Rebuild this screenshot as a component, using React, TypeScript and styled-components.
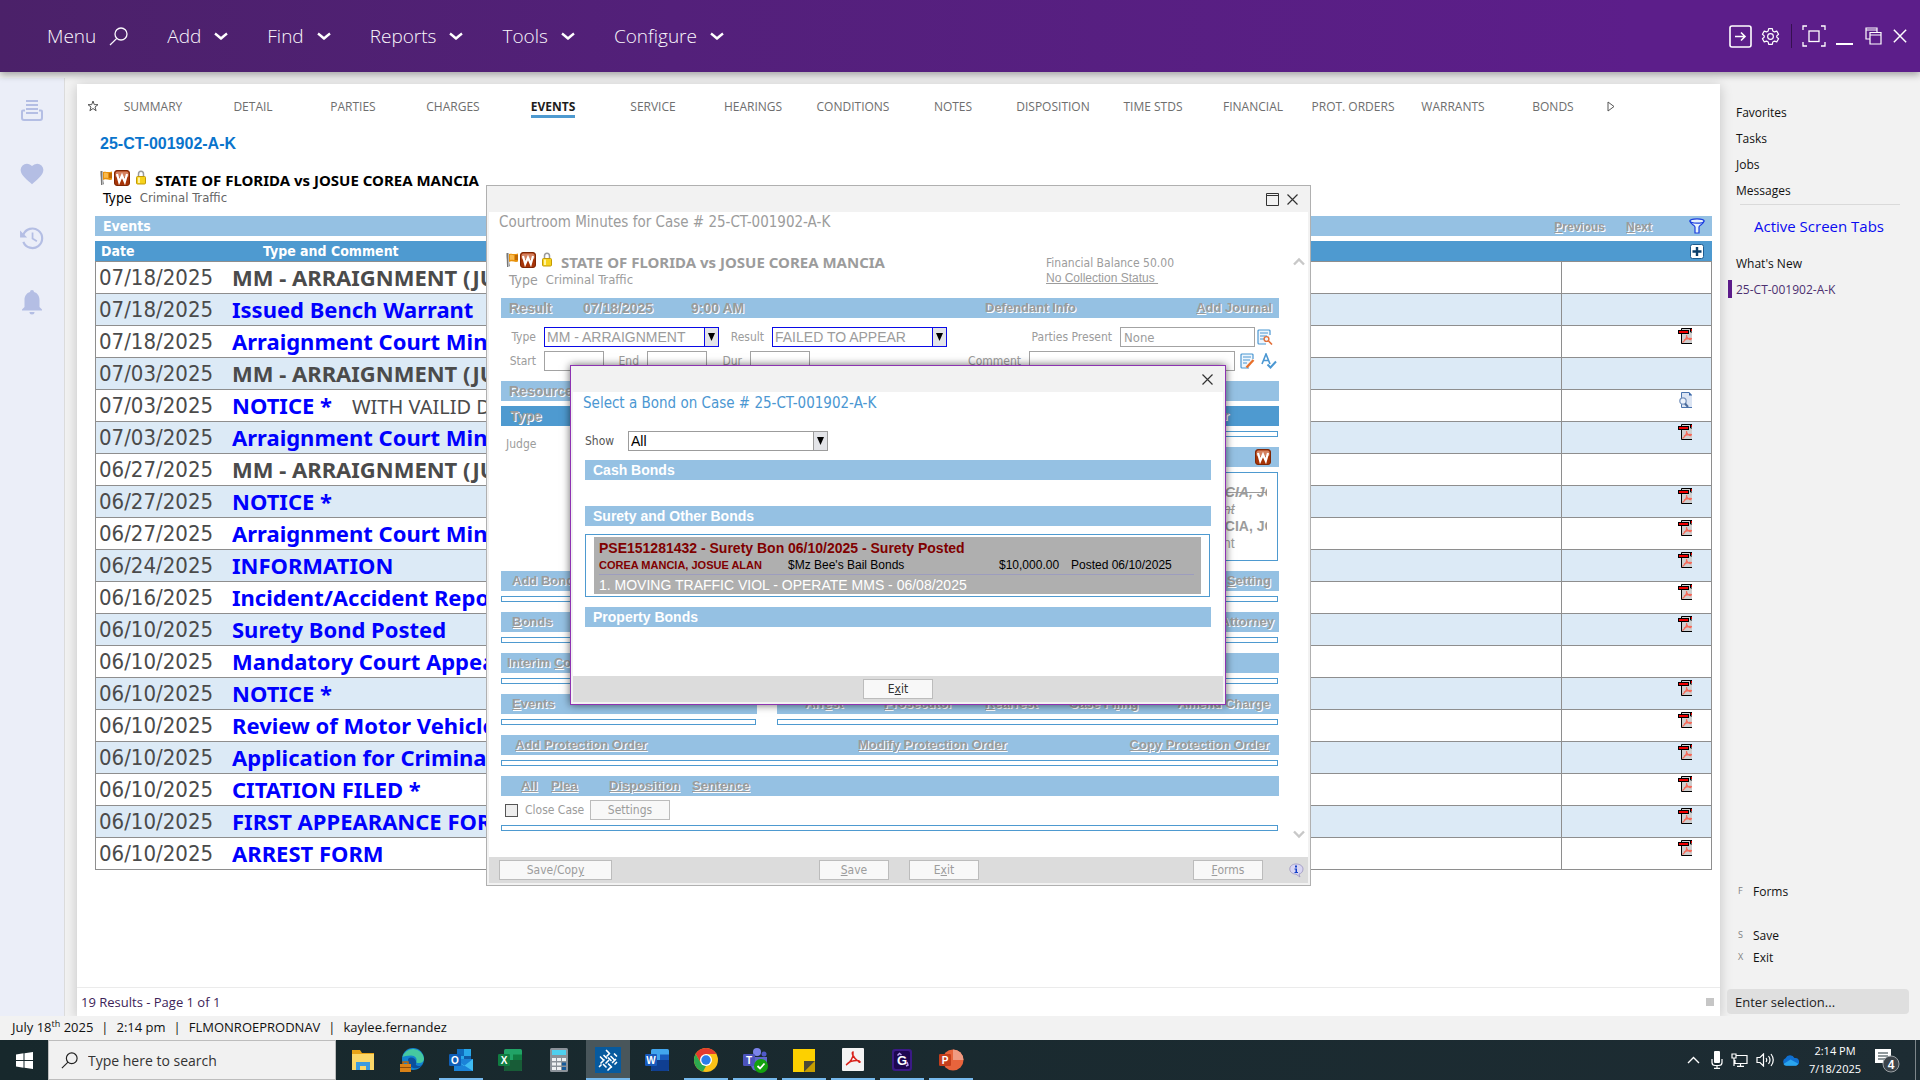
import React from "react";
import styled, { createGlobalStyle, css } from "styled-components";

const segoe = `"Open Sans", "Noto Sans", sans-serif`;
const tahoma = `"DejaVu Sans Condensed", "DejaVu Sans", sans-serif`;
const arial = `"Liberation Sans", Arial, sans-serif`;
const noto = `"Noto Sans", "Open Sans", sans-serif`;

const c = {
  bar: "#95c1e3",
  head: "#4e9ad0",
  grid: "#8e8e8e",
  stripe: "#dceaf6",
  page: "#f2f2f2",
  dim: "#9c9c9c",
  purple: "#5c1b8a",
};

const Global = createGlobalStyle`
  *, *::before, *::after { box-sizing: border-box; }
  html, body { margin: 0; padding: 0; }
  body { background: ${c.page}; font-family: ${segoe}; overflow-x: hidden; }
  button, input, select { font: inherit; margin: 0; }
  a { color: inherit; text-decoration: none; }
  svg { display: block; flex: none; }
`;

const Page = styled.div`
  position: relative;
  display: flex;
  flex-direction: column;
  min-height: 100vh;
`;

/* ---------- top bar ---------- */
const TopBar = styled.header`
  display: flex;
  align-items: center;
  justify-content: space-between;
  height: 72px;
  padding: 0 12px 0 47px;
  background: linear-gradient(90deg, #4b2169 0%, #53207a 35%, #5c1e8a 85%);
  box-shadow: 0 3px 7px rgba(0, 0, 0, 0.32);
  color: #fff;
  z-index: 1;
`;
const MenuNav = styled.nav`
  display: flex;
  align-items: center;
  gap: 39px;
`;
const MenuButton = styled.button`
  display: flex;
  align-items: center;
  gap: 13px;
  padding: 0;
  border: 0;
  background: none;
  color: #fbf8fd;
  font-size: 19px;
  font-weight: 300;
  line-height: 28px;
`;
const WindowTools = styled.div`
  display: flex;
  align-items: center;
  gap: 9px;
`;
const ToolSplit = styled.span`
  width: 1px;
  height: 24px;
  margin: 0 1px 0 2px;
  background: #351050;
`;
const IconButton = styled.button`
  display: flex;
  align-items: center;
  justify-content: center;
  padding: 0;
  border: 0;
  background: none;
  color: inherit;
`;

/* ---------- body frame ---------- */
const Body = styled.div`
  display: grid;
  grid-template-columns: 65px minmax(0, 1fr) 200px;
  flex: 1;
`;
const Rail = styled.nav`
  display: flex;
  flex-direction: column;
  align-items: center;
  gap: 38px;
  margin-top: 6px;
  padding-top: 19px;
  border-right: 1px solid #dcdcdc;
  background: #ebeef8;
  color: #b4bee4;
`;
const RailButton = styled(IconButton)`
  width: 26px;
  height: 26px;
`;
const Panel = styled.main`
  display: flex;
  flex-direction: column;
  margin: 12px 0 0 12px;
  background: #fff;
  box-shadow: 0 2px 12px rgba(0, 0, 0, 0.2);
`;
const Tabs = styled.nav`
  display: flex;
  align-items: center;
  height: 44px;
  padding-left: 8px;
  color: #6e6e6e;
`;
const Tab = styled.a<{ $active?: boolean }>`
  display: flex;
  justify-content: center;
  width: 100px;
  font-size: 12px;
  line-height: 18px;
  white-space: nowrap;
  span {
    border-bottom: 3px solid transparent;
    height: 20px;
  }
  ${(p) =>
    p.$active &&
    css`
      color: #1d1d1d;
      font-weight: 700;
      span {
        border-color: ${c.head};
      }
    `}
`;
const TabIcon = styled(IconButton)`
  width: 16px;
  height: 16px;
  color: #555;
`;
const TabStrip = styled.div`
  display: flex;
  margin-top: 4px;
  padding-left: 2px;
`;
const PanelBody = styled.div`
  flex: 1;
  padding: 0 8px 0 18px;
`;
const CaseNumber = styled.a`
  display: block;
  padding-left: 5px;
  color: #0a74cc;
  font: 700 16px/32px ${arial};
`;
const CaseTitle = styled.div<{ $top?: number }>`
  display: flex;
  gap: 1px;
  height: 22px;
  margin-top: ${(p) => p.$top || 0}px;
  padding-left: 5px;
  strong {
    margin-left: 5px;
    font: 700 15px/20px ${noto};
    white-space: nowrap;
  }
`;
const CaseType = styled.div`
  display: flex;
  align-items: center;
  height: 12px;
  padding-left: 8px;
  font: 14px/14px ${tahoma};
  span {
    margin-left: 8px;
    color: #666;
    font-size: 13px;
  }
`;
const Emboss = styled.span<{ $u?: boolean }>`
  color: #9b9b9b;
  font: 700 13px/20px ${arial};
  text-shadow: 1px 1px 0 #fff;
  white-space: nowrap;
  text-decoration: ${(p) => (p.$u ? "underline" : "none")};
`;
const EmbossLink = styled(Emboss).attrs({ as: "a", href: "#" } as any)``;
const ListBar = styled.div`
  display: flex;
  align-items: center;
  height: 20px;
  margin: 12px 0 5px;
  padding: 0 7px 0 8px;
  background: ${c.bar};
  color: #fff;
  h2 {
    flex: 1;
    margin: 0;
    font: 700 14px/20px ${tahoma};
  }
`;
const ListLinks = styled.div`
  display: flex;
  gap: 21px;
  margin-right: 37px;
  padding-top: 2px;
  ${Emboss} { font-size: 12px; }
`;

/* ---------- event table ---------- */
const EventTable = styled.table`
  width: 100%;
  table-layout: fixed;
  border-collapse: separate;
  border-spacing: 0;
  font-family: ${tahoma};
  th {
    height: 21px;
    padding: 0 0 0 6px;
    border-bottom: 1px solid ${c.grid};
    background: ${c.head};
    color: #fff;
    font-size: 14px;
    line-height: 20px;
    text-align: left;
  }
  th:nth-child(2) {
    padding-left: 31px;
  }
  th:last-child svg {
    margin: 0 8px 0 auto;
  }
  td {
    height: 32px;
    padding: 0;
    border-bottom: 1px solid ${c.grid};
    color: #4b4b4b;
    font-size: 22px;
    line-height: 31px;
    white-space: nowrap;
    overflow: hidden;
    vertical-align: top;
  }
  td:first-child {
    padding-left: 3px;
    border-left: 1px solid ${c.grid};
  }
  td:last-child {
    border-left: 1px solid ${c.grid};
    border-right: 1px solid ${c.grid};
  }
  td:last-child svg {
    margin: 2px 19px 0 auto;
  }
  tbody tr:nth-child(even) td {
    background: ${c.stripe};
  }
`;
const EventCell = styled.div`
  height: 31px;
  overflow: hidden;
  font: 22px/31px ${noto};
`;
const EventName = styled.a<{ $plain?: boolean }>`
  color: ${(p) => (p.$plain ? "#4b4b4b" : "#0000fe")};
  font-weight: 700;
`;
const EventNote = styled.span`
  margin-left: 20px;
  font-size: 20px;
`;
const Results = styled.footer`
  display: flex;
  align-items: center;
  justify-content: space-between;
  height: 29px;
  padding: 0 6px 0 4px;
  border-top: 1px solid #ebebeb;
  color: #3c2358;
  font-size: 13px;
`;
const Grip = styled.span`
  width: 8px;
  height: 8px;
  background: #c6c6c6;
`;

/* ---------- right side ---------- */
const Side = styled.aside`
  display: flex;
  flex-direction: column;
  padding: 27px 11px 2px 7px;
  color: #111;
  font-size: 12px;
`;
const SideLink = styled.a<{ $active?: boolean }>`
  display: flex;
  align-items: center;
  height: 18px;
  margin: 4px 0 4px 1px;
  padding-left: 4px;
  border-left: 4px solid ${(p) => (p.$active ? c.purple : "transparent")};
  color: ${(p) => (p.$active ? "#4c3070" : "#111")};
`;
const SideRule = styled.hr`
  width: 160px;
  height: 1px;
  margin: 1px 0 11px 13px;
  border: 0;
  background: #dadada;
`;
const SideTitle = styled.a`
  margin: 0 0 14px 27px;
  color: #0a0af0;
  font-size: 15px;
  line-height: 20px;
`;
const Shortcuts = styled.div`
  display: flex;
  flex-direction: column;
  margin-top: auto;
`;
const Shortcut = styled.button<{ $gap?: number }>`
  display: flex;
  align-items: center;
  height: 22px;
  margin-bottom: ${(p) => p.$gap || 0}px;
  padding: 0 0 0 11px;
  border: 0;
  background: none;
  color: #111;
  font-size: 12px;
  kbd {
    width: 15px;
    color: #808080;
    font: 9px/22px ${segoe};
    text-align: left;
  }
`;
const SelectionInput = styled.input`
  width: 100%;
  height: 25px;
  padding: 0 8px;
  border: 0;
  border-radius: 4px;
  background: #dfdfdf;
  font-size: 13px;
  &::placeholder {
    color: #222;
    opacity: 1;
  }
`;

/* ---------- status + taskbar ---------- */
const Status = styled.div`
  display: flex;
  align-items: center;
  gap: 8px;
  height: 24px;
  padding: 0 0 2px 12px;
  background: ${c.page};
  color: #111;
  font-size: 13px;
  sup {
    font-size: 9px;
    line-height: 0;
  }
`;
const Taskbar = styled.footer`
  display: flex;
  height: 40px;
  background: linear-gradient(90deg, #17282c, #1d2c33);
  color: #fff;
`;
const StartButton = styled(IconButton)`
  width: 48px;
`;
const SearchBox = styled.label`
  display: flex;
  align-items: center;
  gap: 10px;
  width: 288px;
  padding-left: 12px;
  border: 1px solid #bdbdbd;
  background: #f1f1f1;
  color: #222;
  input {
    flex: 1;
    min-width: 0;
    padding: 0;
    border: 0;
    background: none;
    font-size: 14px;
  }
  input::placeholder {
    color: #333;
    opacity: 1;
  }
`;
const AppRow = styled.div`
  display: flex;
  flex: 1;
  gap: 5px;
  padding-left: 5px;
`;
const AppButton = styled(IconButton)<{ $open?: boolean; $active?: boolean }>`
  width: 44px;
  border-bottom: 2px solid transparent;
  border-top: 2px solid transparent;
  ${(p) => p.$open && css`border-bottom-color: #76b9ed;`}
  ${(p) => p.$active && css`background: #49565b; border-top-color: #49565b;`}
`;
const Tray = styled.div`
  display: flex;
  align-items: center;
  gap: 8px;
`;
const TrayArrow = styled.svg`
  margin-right: 3px;
`;
const Clock = styled.time`
  width: 56px;
  margin-right: 3px;
  font: 11px/18px ${segoe};
  text-align: center;
`;
const ShowDesktop = styled.span`
  width: 5px;
  height: 40px;
  margin-left: 7px;
  border-left: 1px solid #7d868a;
`;

/* ---------- windows ---------- */
const Window = styled.section<{ $left: number; $top: number; $width: number; $height: number; $front?: boolean }>`
  position: absolute;
  z-index: 2;
  left: ${(p) => p.$left}px;
  top: ${(p) => p.$top}px;
  display: flex;
  flex-direction: column;
  width: ${(p) => p.$width}px;
  min-height: ${(p) => p.$height}px;
  padding: 0 2px 2px;
  border: 1px solid ${(p) => (p.$front ? "#8e33b2" : "#b0b0b0")};
  background: ${c.page};
  ${(p) => p.$front && css`box-shadow: 0 0 8px rgba(0, 0, 0, 0.6);`}
`;
const WindowBar = styled.div`
  display: flex;
  align-items: center;
  justify-content: flex-end;
  gap: 7px;
  height: 26px;
  padding-right: 9px;
  color: #333;
`;
const WindowTitle = styled.h1<{ $front?: boolean }>`
  margin: 0;
  padding-left: 10px;
  color: ${(p) => (p.$front ? "#4b97d2" : c.dim)};
  font: 400 15px/${(p) => (p.$front ? 22 : 20)}px ${tahoma};
`;
const WindowBody = styled.div`
  flex: 1;
  background: #fff;
`;
const WindowFoot = styled.div`
  display: flex;
  align-items: center;
  height: 26px;
  background: #dcdcdc;
`;
const PushButton = styled.button<{ $width: number; $dim?: boolean }>`
  width: ${(p) => p.$width}px;
  height: 20px;
  padding: 0;
  border: 1px solid #bcbcbc;
  background: #f8f8f8;
  color: ${(p) => (p.$dim ? c.dim : "#333")};
  font: 12px/18px ${tahoma};
`;
const Scroller = styled.div`
  display: flex;
  gap: 14px;
  padding: 20px 3px 0 12px;
`;
const Form = styled.div`
  flex: 1;
  min-width: 0;
  color: ${c.dim};
  font: 12px/20px ${tahoma};
`;
const ScrollArrows = styled.div`
  display: flex;
  flex-direction: column;
  justify-content: space-between;
  padding: 5px 0 2px;
  color: #c8c8c8;
`;
const FormHead = styled.div`
  display: grid;
  grid-template-columns: 545px 1fr;
  height: 36px;
  margin-bottom: 10px;
  ${CaseType} span { color: ${c.dim}; }
`;
const Balance = styled.div`
  padding-top: 4px;
  line-height: 15px;
  a {
    display: block;
    font: 12px/15px ${arial};
    text-decoration: underline;
  }
`;
const Bar = styled.div<{ $cols?: string; $pad?: string; $dark?: boolean }>`
  display: grid;
  grid-template-columns: ${(p) => p.$cols || "1fr auto"};
  align-items: center;
  height: 20px;
  padding: ${(p) => p.$pad || "0 8px"};
  background: ${(p) => (p.$dark ? c.head : c.bar)};
  h2 {
    margin: 0;
    color: #fff;
    font: 700 14px/20px ${arial};
  }
`;
const Big = styled(Emboss)`
  font-size: 14px;
`;
const Field = styled.div<{ $top: number }>`
  display: flex;
  align-items: center;
  height: 20px;
  margin-top: ${(p) => p.$top}px;
`;
const FieldLabel = styled.label<{ $width: number }>`
  width: ${(p) => p.$width}px;
  padding-right: 8px;
  text-align: right;
  white-space: nowrap;
`;
const TextBox = styled.input<{ $width: number }>`
  width: ${(p) => p.$width}px;
  height: 20px;
  margin-right: 2px;
  padding: 0 3px;
  border: 1px solid #a3a3a3;
  background: #fff;
  color: ${c.dim};
  font: 13px/18px ${tahoma};
`;
const TimeBox = styled(TextBox)`
  margin-right: 0;
`;
const Combo = styled.span<{ $width: number; $blue?: boolean }>`
  position: relative;
  display: block;
  width: ${(p) => p.$width}px;
  height: 20px;
  border: 1px solid ${(p) => (p.$blue ? "#0a0ae6" : "#9c9c9c")};
  background: #fff;
  select {
    width: 100%;
    height: 18px;
    padding: 0 18px 0 2px;
    border: 0;
    appearance: none;
    background: none;
    color: ${(p) => (p.$blue ? c.dim : "#000")};
    font: 14px/18px ${arial};
  }
  i {
    position: absolute;
    inset: 0 0 0 auto;
    display: flex;
    align-items: center;
    justify-content: center;
    width: 14px;
    border-left: 1px solid ${(p) => (p.$blue ? "#0a0ae6" : "#9c9c9c")};
    background: #e3e4e8;
    pointer-events: none;
  }
`;
const Split = styled.div`
  display: grid;
  grid-template-columns: 256px minmax(0, 1fr);
  column-gap: 20px;
`;
const Judge = styled.div`
  padding: 8px 0 0 5px;
`;
const Strip = styled.div`
  height: 6px;
  margin: 5px 1px 10px 0;
  border: 1px solid ${c.head};
`;
const PartyBox = styled.div`
  height: 89px;
  margin: 5px 1px 10px 0;
  padding: 11px 10px 0 361px;
  border: 1px solid ${c.head};
`;
const PartyName = styled.div<{ $struck?: boolean }>`
  overflow: hidden;
  font: ${(p) => (p.$struck ? "italic" : "normal")} 700 14px/17px ${arial};
  text-decoration: ${(p) => (p.$struck ? "line-through" : "none")};
  white-space: nowrap;
`;
const PartyRole = styled(PartyName)`
  padding-left: 31px;
  font-weight: 400;
`;
const CloseRow = styled.div`
  display: flex;
  align-items: center;
  height: 20px;
  margin-top: 4px;
  padding-left: 4px;
  label {
    width: 65px;
    margin-left: 7px;
  }
`;
const CheckBox = styled.input`
  width: 13px;
  height: 13px;
  border: 1px solid #555;
  appearance: none;
  background: #eee;
`;
const BondForm = styled.div`
  padding: 17px 12px 48px;
`;
const ShowRow = styled.div`
  display: flex;
  align-items: center;
  margin-bottom: 9px;
  color: #555;
  font: 12px/20px ${tahoma};
  label {
    width: 43px;
  }
`;
const BondBox = styled.div`
  margin: 8px 1px 10px 0;
  padding: 2px 8px;
  border: 1px solid ${c.head};
`;
const BondCard = styled.article`
  display: grid;
  grid-template-columns: 189px 211px 72px 1fr;
  padding: 2px 7px 0 5px;
  background: #afafaf;
  color: #000;
  font: 12px/16px ${arial};
  white-space: nowrap;
`;
const BondLine = styled.strong<{ $small?: boolean }>`
  color: #800000;
  font-size: ${(p) => (p.$small ? 11 : 14)}px;
  line-height: ${(p) => (p.$small ? 16 : 18)}px;
`;
const BondDate = styled(BondLine)`
  grid-column: 2 / -1;
`;
const BondCharge = styled.div`
  grid-column: 1 / -1;
  margin-top: 1px;
  padding-top: 2px;
  border-top: 1px solid #9d9dbe;
  color: #fff;
  font-size: 14px;
  line-height: 17px;
`;
const Spacer = styled.div<{ $height?: number; $width?: number }>`
  flex: none;
  width: ${(p) => p.$width || 0}px;
  height: ${(p) => p.$height || 0}px;
`;
const Grow = styled.span`
  flex: 1;
`;

/* ---------- icons ---------- */
const Chevron = () => (
  <svg width="14" height="9" viewBox="0 0 14 9" fill="none" stroke="#fff" strokeWidth="2.400">
    <path d="M1 1.500Q3 3 7 6.500 11 3 13 1.500" />
  </svg>
);
const Cross = ({ s = 13 }: { s?: number }) => (
  <svg width={s} height={s} viewBox="0 0 13 13" stroke="currentColor" strokeWidth="1.200">
    <path d="M1.500 1.500 11.500 11.500M11.500 1.500 1.500 11.500" />
  </svg>
);
const Magnifier = ({ s = 19 }: { s?: number }) => (
  <svg width={s} height={s} viewBox="0 0 19 19" fill="none" stroke="currentColor" strokeWidth="1.300">
    <circle cx="12" cy="7" r="6" />
    <path d="M7.800 11.400 1 18" />
  </svg>
);
const CaseIcons = () => (
  <>
    <svg width="13" height="16" viewBox="0 0 13 16">
      <path d="M0 2h1.500L4 14l-1.500 1z" fill="#8a8a8a" />
      <path d="M0 1h3v13H1z" fill="#b9b9b9" />
      <path d="M1 1h1v14H1z" fill="#777" />
      <path d="M3 2c3-1 4 1 9-.500v8C9 11 6 8 3 10z" fill="#e8920c" />
      <path d="M4 3c2-.500 3 .500 4 .500V8c-1 0-2-.500-4 0z" fill="#f9b94c" />
      <path d="M9 3h3v5H9z" fill="#c06a04" />
    </svg>
    <Warrant />
    <svg width="18" height="16" viewBox="-5 0 18 16">
      <path d="M2.500 7V4a2.500 2.800 0 0 1 5 0v3" fill="none" stroke="#9a9a9a" strokeWidth="1.500" />
      <rect x=".5" y="6.500" width="9" height="7.500" rx="1" fill="#f6d21c" stroke="#c39a06" />
      <path d="M2 7.500h2v5.500H2z" fill="#fff3a0" />
    </svg>
  </>
);
const Warrant = () => (
  <svg width="16" height="16" viewBox="0 0 16 16">
    <rect x=".5" y=".5" width="15" height="15" rx="2.500" fill="#a63408" stroke="#7e2604" />
    <rect x="1.500" y="1.500" width="13" height="6" rx="2" fill="#d4815f" />
    <path d="m3 4 2.200 8L8 5.500 10.800 12 13 4" fill="none" stroke="#fff" strokeWidth="2.200" />
  </svg>
);
const Pdf = () => (
  <svg width="14" height="16" viewBox="0 0 14 16" role="img" aria-label="PDF document">
    <path d="M3 0h9v3h2v13H3z" fill="#cfcfcf" />
    <path d="M14 15.500H3.500V.5H14" fill="none" stroke="#000" />
    <path d="M12.500 1v3H14" fill="none" stroke="#000" />
    <rect x=".5" y="2.500" width="10" height="3" fill="#f00000" stroke="#000" />
    <path d="M13 1h1v2h-1z" fill="#e00" />
    <path d="M4.500 14.500C7 12.500 9 9.500 8.500 7c0 3 2.500 4.800 5 4.500M6 12c3-1.800 5-2 8-1.500" fill="none" stroke="#f66a5a" strokeWidth="1.200" />
  </svg>
);
const DocLens = () => (
  <svg width="13" height="16" viewBox="0 0 13 16" role="img" aria-label="Preview document">
    <path d="M13 15.500H2.500V.5H10l3 3" fill="#dbe4f3" stroke="#4b74ae" />
    <path d="M10 0v3.500h3z" fill="#3665a8" />
    <circle cx="4" cy="9" r="3.200" fill="#eef4fc" stroke="#7b96bf" strokeWidth="1.300" />
    <path d="m6 11.500 3 3.500" stroke="#4c6c9c" strokeWidth="2" />
  </svg>
);
const FormSheet = ({ lens }: { lens?: boolean }) => (
  <svg width="16" height="16" viewBox="0 0 16 16" fill="none">
    <path d="M13 6V2a1 1 0 0 0-1-1H2a1 1 0 0 0-1 1v12a1 1 0 0 0 1 1h7" stroke="#4b97d2" strokeWidth="1.200" fill="#eef6fd" />
    <path d="M3 4h8M3 7h7M3 10h4" stroke="#4b97d2" />
    {lens ? (
      <>
        <circle cx="9.500" cy="10" r="2.400" stroke="#e2703a" strokeWidth="1.400" />
        <path d="m11.500 12 3.500 3.500" stroke="#e2703a" strokeWidth="1.600" />
      </>
    ) : (
      <path d="m6.500 14.500 7-7.500" stroke="#e8702a" strokeWidth="2.400" />
    )}
  </svg>
);
const SpellCheck = () => (
  <svg width="16" height="16" viewBox="0 0 16 16" fill="none" stroke="#4b97d2" strokeWidth="1.600">
    <path d="M1 11 5 1l4 10M2.500 7.500h5" />
    <path d="m6.500 11.500 3 3L15 8.500" strokeWidth="2" />
  </svg>
);
const DownTriangle = () => (
  <svg width="7" height="8" viewBox="0 0 7 8"><path d="M0 0h7L3.500 8z" fill="#000" /></svg>
);
const ScrollArrow = ({ down }: { down?: boolean }) => (
  <svg width="12" height="9" viewBox="0 0 12 9" fill="none" stroke="currentColor" strokeWidth="2.400">
    <path d={down ? "M1 1.500l5 5 5-5" : "M1 7.500l5-5 5 5"} />
  </svg>
);
const InfoBubble = () => (
  <svg width="15" height="15" viewBox="0 0 15 15">
    <path d="M7 1c4 0 7 2 7 5s-2 4.500-4 5l1 3-4-2.800C3.500 11 .8 9 .8 6S3.500 1 7 1z" fill="#d9d6f2" stroke="#9a94bf" strokeWidth=".8" />
    <path d="M6 2.500h2v2H6zM5.500 5.500H8v3.500h1v1H5.500V9h1V6.500h-1z" fill="#1440c8" />
  </svg>
);

/* Taskbar pictures share one 26 x 26 canvas. */
const Tile = ({ children }: { children: React.ReactNode }) => (
  <svg width="26" height="26" viewBox="0 0 26 26">{children}</svg>
);
const letter = { fontFamily: arial, fontWeight: 700, fill: "#fff", textAnchor: "middle" as const };
const OfficeTile = ({ main, light, dark, ch, round }: { main: string; light: string; dark: string; ch: string; round?: boolean }) => (
  <Tile>
    {round ? (
      <><circle cx="15" cy="13" r="10.500" fill={light} /><path d="M15 2.500A10.500 10.500 0 0 1 25.500 13H15z" fill="#f09a82" /></>
    ) : (
      <><rect x="7" y="2" width="18" height="22" rx="1.500" fill={light} /><path d="M7 13h18v9.500a1.500 1.500 0 0 1-1.500 1.500h-15A1.500 1.500 0 0 1 7 22.500z" fill={dark} /><path d="M16 7.500h9V13h-9z" fill={main} /></>
    )}
    <rect x="1" y="7" width="12" height="12" rx="1.200" fill={main} />
    <text x="7" y="16.500" fontSize="10" {...letter}>{ch}</text>
  </Tile>
);
const Explorer = () => (
  <Tile>
    <path d="M2 3h8l2 3h12v17H2z" fill="#e8a317" />
    <path d="M2 7h22v16H2z" fill="#fbd768" />
    <path d="M6 15h14v8h-4v-4h-6v4H6z" fill="#3b9be0" />
  </Tile>
);
const Edge = () => (
  <Tile>
    <circle cx="14" cy="12" r="11" fill="#1282d0" />
    <path d="M3.500 10A11 11 0 0 1 25 11.500c0 4-4 5.500-8 4 2-4-1-7-5-7-4 0-7 1-8.500 1.500z" fill="#46c8a0" />
    <path d="M9 12c3-3 7-1 8 2 1 2-1 3 0 4 2 2 5 1 7-1-3 6-15 7-15-5z" fill="#0c4f9c" />
    <path d="M1 17h11v8H1z" fill="#d98217" /><path d="M4 17v-2h5v2" stroke="#b8660a" strokeWidth="1.500" fill="none" />
    <path d="M1 20h11v1H1z" fill="#8c4b06" />
  </Tile>
);
const Outlook = () => (
  <Tile>
    <rect x="9" y="2" width="14" height="14" fill="#28a8ea" />
    <path d="M9 2h7v7H9z" fill="#0f6cbd" /><path d="M16 9h7v6h-7z" fill="#0f5ca6" />
    <path d="M6 12h19v12H6z" fill="#1b83d8" /><path d="m6 12 10 7 9-7v12z" fill="#3fbcf2" />
    <rect x="1" y="7" width="12" height="12" rx="1.200" fill="#0f5fb8" />
    <text x="7" y="16.500" fontSize="10" {...letter}>O</text>
  </Tile>
);
const Calculator = () => (
  <Tile>
    <rect x="4" y="1" width="18" height="24" rx="1.500" fill="#8b9299" />
    <rect x="6" y="3" width="14" height="5" fill="#4fd0ee" />
    {[11, 15.5, 20].map((y) => [6, 11, 16].map((x) => (
      <rect key={`${x}-${y}`} x={x} y={y} width="4" height="3" fill={x === 16 && y > 12 ? "#175a9a" : "#eef1f3"} />
    )))}
  </Tile>
);
const CourtApp = () => (
  <Tile>
    <rect width="26" height="26" fill="#075a9e" />
    <g stroke="#fff" strokeWidth="1.700" strokeLinecap="round">
      <path d="M11.500 3.500 14 6M14.500 6.500 12 9M9 8.500l2.500 2.500M5.500 10 8 12.500M16 9.500l3 3M19.500 7l2 2M13.500 11l2.500 2.500M6 16l3-3M11 16l2.500-2.500M17.500 15.500l3-3M8.500 17.500 11 20M13.500 17l3 3M13 23l2.500-2.500M20 17l1.500-1.500M4.500 19.500 6 18" />
    </g>
  </Tile>
);
const Chrome = () => (
  <Tile>
    <circle cx="13" cy="13" r="12" fill="#fbc116" />
    <path d="M13 1a12 12 0 0 1 10.400 6H13L7.800 16 2.600 7A12 12 0 0 1 13 1z" fill="#e33b2e" />
    <path d="M2.600 7l5.200 9 5.200 3-3 5.600A12 12 0 0 1 2.600 7z" fill="#2da94f" />
    <circle cx="13" cy="13" r="6" fill="#fff" /><circle cx="13" cy="13" r="4.700" fill="#2b7de9" />
  </Tile>
);
const Teams = () => (
  <Tile>
    <circle cx="15" cy="5" r="4" fill="#7b83eb" /><circle cx="22" cy="7" r="2.500" fill="#5059c9" />
    <path d="M9 10h16v8a6 6 0 0 1-6 6h-4a6 6 0 0 1-6-6z" fill="#5f66cc" />
    <rect x="1" y="7" width="12" height="12" rx="1.200" fill="#4b53bc" />
    <text x="7" y="16.500" fontSize="10" {...letter}>T</text>
    <circle cx="19" cy="19" r="7" fill="#13a10e" /><path d="m15.500 19 2.500 2.500 4.500-5" stroke="#fff" strokeWidth="1.800" fill="none" />
  </Tile>
);
const Notes = () => (
  <Tile>
    <path d="M2 2h22v12L13 25H2z" fill="#fdd000" /><path d="M13 25V14h11z" fill="#4b4736" /><path d="M13 25 24 14v11z" fill="#c79d00" />
  </Tile>
);
const Acrobat = () => (
  <Tile>
    <rect x="2" y="1" width="22" height="23" rx="1" fill="#f4f4f4" />
    <path d="M6 18c4-2 8-8 7-13-1.500 0-1 5 6 10 2 1 1-1.500-2-1.500-4 0-8 1.500-10 3.500" fill="none" stroke="#d9231c" strokeWidth="1.500" />
  </Tile>
);
const GApp = () => (
  <Tile>
    <rect x="3" y="2" width="20" height="22" rx="3" fill="#3b1a86" /><rect x="5" y="4" width="16" height="18" rx="2" fill="#1d0750" />
    <path d="M8.500 8.500l2-2 2 1.500M17 19l2-1-1-3" stroke="#b79cf0" strokeWidth="1.500" fill="none" />
    <text x="13" y="18" fontSize="13" {...letter}>G</text>
  </Tile>
);

/* ---------- data ---------- */
const menus = ["Add", "Find", "Reports", "Tools", "Configure"];
const tabs = ["SUMMARY", "DETAIL", "PARTIES", "CHARGES", "EVENTS", "SERVICE", "HEARINGS", "CONDITIONS", "NOTES", "DISPOSITION", "TIME STDS", "FINANCIAL", "PROT. ORDERS", "WARRANTS", "BONDS"];
type Event = { date: string; name: string; note?: string; doc?: "pdf" | "lens"; plain?: boolean };
const events: Event[] = [
  { date: "07/18/2025", name: "MM - ARRAIGNMENT (JUDGE)", plain: true },
  { date: "07/18/2025", name: "Issued Bench Warrant" },
  { date: "07/18/2025", name: "Arraignment Court Minutes", doc: "pdf" },
  { date: "07/03/2025", name: "MM - ARRAIGNMENT (JUDGE)", plain: true },
  { date: "07/03/2025", name: "NOTICE *", note: "WITH VAILID DL", doc: "lens" },
  { date: "07/03/2025", name: "Arraignment Court Minutes", doc: "pdf" },
  { date: "06/27/2025", name: "MM - ARRAIGNMENT (JUDGE)", plain: true },
  { date: "06/27/2025", name: "NOTICE *", doc: "pdf" },
  { date: "06/27/2025", name: "Arraignment Court Minutes", doc: "pdf" },
  { date: "06/24/2025", name: "INFORMATION", doc: "pdf" },
  { date: "06/16/2025", name: "Incident/Accident Report", doc: "pdf" },
  { date: "06/10/2025", name: "Surety Bond Posted", doc: "pdf" },
  { date: "06/10/2025", name: "Mandatory Court Appearance" },
  { date: "06/10/2025", name: "NOTICE *", doc: "pdf" },
  { date: "06/10/2025", name: "Review of Motor Vehicle", doc: "pdf" },
  { date: "06/10/2025", name: "Application for Criminal", doc: "pdf" },
  { date: "06/10/2025", name: "CITATION FILED *", doc: "pdf" },
  { date: "06/10/2025", name: "FIRST APPEARANCE FORM", doc: "pdf" },
  { date: "06/10/2025", name: "ARREST FORM", doc: "pdf" },
];
const apps: { name: string; icon: React.ReactNode; open?: boolean; active?: boolean }[] = [
  { name: "File Explorer", icon: <Explorer /> },
  { name: "Edge", icon: <Edge /> },
  { name: "Outlook", icon: <Outlook />, open: true },
  { name: "Excel", icon: <OfficeTile main="#107c41" light="#21a366" dark="#185c37" ch="X" /> },
  { name: "Calculator", icon: <Calculator /> },
  { name: "Court", icon: <CourtApp />, open: true, active: true },
  { name: "Word", icon: <OfficeTile main="#185abd" light="#41a5ee" dark="#103f91" ch="W" /> },
  { name: "Chrome", icon: <Chrome />, open: true },
  { name: "Teams", icon: <Teams />, open: true },
  { name: "Sticky Notes", icon: <Notes />, open: true },
  { name: "Acrobat", icon: <Acrobat />, open: true },
  { name: "G", icon: <GApp />, open: true },
  { name: "PowerPoint", icon: <OfficeTile main="#c43e1c" light="#e8643c" dark="#b33" ch="P" round />, open: true },
];

const Title = ({ top }: { top?: number }) => (
  <CaseTitle $top={top}>
    <CaseIcons />
    <strong>STATE OF FLORIDA vs JOSUE COREA MANCIA</strong>
  </CaseTitle>
);

const SelectBox = ({ id, value, width, blue }: { id: string; value: string; width: number; blue?: boolean }) => (
  <Combo $width={width} $blue={blue}>
    <select id={id} defaultValue={value}><option>{value}</option></select>
    <i><DownTriangle /></i>
  </Combo>
);

function MinutesWindow() {
  return (
    <Window $left={486} $top={185} $width={825} $height={701}>
      <WindowBar>
        <IconButton aria-label="Maximize">
          <svg width="13" height="13" viewBox="0 0 13 13" fill="none" stroke="currentColor"><path d="M.5.5h12v12H.5zM.5 2.500h12" /></svg>
        </IconButton>
        <IconButton aria-label="Close"><Cross /></IconButton>
      </WindowBar>
      <WindowBody>
        <WindowTitle>Courtroom Minutes for Case # 25-CT-001902-A-K</WindowTitle>
        <Scroller>
          <Form>
            <FormHead>
              <div>
                <Title />
                <CaseType>Type<span>Criminal Traffic</span></CaseType>
              </div>
              <Balance>
                Financial Balance 50.00
                <a href="#">No Collection Status&nbsp;</a>
              </Balance>
            </FormHead>
            <Bar $cols="74px 108px 294px 1fr auto" $pad="0 7px 0 8px">
              <Big>Result</Big><Big>07/18/2025</Big><Big>9:00 AM</Big>
              <EmbossLink>Defendant Info</EmbossLink>
              <EmbossLink><u>A</u>dd Journal</EmbossLink>
            </Bar>
            <Field $top={9}>
              <FieldLabel $width={43} htmlFor="type">Type</FieldLabel>
              <SelectBox id="type" value="MM - ARRAIGNMENT" width={175} blue />
              <FieldLabel $width={53} htmlFor="result">Result</FieldLabel>
              <SelectBox id="result" value="FAILED TO APPEAR" width={175} blue />
              <FieldLabel $width={173} htmlFor="parties">Parties Present</FieldLabel>
              <TextBox id="parties" $width={135} defaultValue="None" />
              <FormSheet lens />
            </Field>
            <Field $top={4}>
              <FieldLabel $width={43} htmlFor="start">Start</FieldLabel>
              <TimeBox id="start" $width={60} />
              <FieldLabel $width={43} htmlFor="end">End</FieldLabel>
              <TimeBox id="end" $width={60} />
              <FieldLabel $width={43} htmlFor="dur">Dur</FieldLabel>
              <TimeBox id="dur" $width={60} />
              <FieldLabel $width={219} htmlFor="comment">Comment</FieldLabel>
              <TextBox id="comment" $width={206} />
              <Spacer $width={3} />
              <FormSheet />
              <Spacer $width={5} />
              <SpellCheck />
            </Field>
            <Spacer $height={10} />
            <Bar><Big>Resources</Big></Bar>
            <Spacer $height={5} />
            <Bar $dark $pad="0 50px 0 9px"><Big>Type</Big><Emboss>Reporter</Emboss></Bar>
            <Split>
              <Judge>Judge</Judge>
              <div>
                <Strip />
                <Bar><span /><Warrant /></Bar>
                <PartyBox>
                  <PartyName $struck>COREA MANCIA, JOSUE ALAN</PartyName>
                  <PartyRole $struck>Defendant</PartyRole>
                  <PartyName>COREA MANCIA, JOSUE ALAN</PartyName>
                  <PartyRole>Defendant</PartyRole>
                </PartyBox>
              </div>
            </Split>
            <Bar $pad="0 8px 0 11px"><EmbossLink>Add Bond</EmbossLink><EmbossLink>Add <u>S</u>etting</EmbossLink></Bar>
            <Strip />
            <Bar $pad="0 5px 0 11px"><EmbossLink><u>B</u>onds</EmbossLink><EmbossLink>Attorney</EmbossLink></Bar>
            <Strip />
            <Bar $pad="0 6px"><EmbossLink>Interim <u>C</u>onditions</EmbossLink></Bar>
            <Strip />
            <Split>
              <div>
                <Bar $pad="0 11px"><EmbossLink><u>E</u>vents</EmbossLink></Bar>
                <Strip />
              </div>
              <div>
                <Bar $cols="79px 101px 84px 1fr auto" $pad="0 9px 0 28px">
                  <EmbossLink>Arr<u>e</u>st</EmbossLink>
                  <EmbossLink><u>P</u>rosecutor</EmbossLink>
                  <EmbossLink><u>R</u>earrest</EmbossLink>
                  <EmbossLink>Case Fi<u>l</u>ing</EmbossLink>
                  <EmbossLink>Amend Char<u>g</u>e</EmbossLink>
                </Bar>
                <Strip />
              </div>
            </Split>
            <Bar $cols="343px 1fr auto" $pad="0 10px 0 14px">
              <EmbossLink $u>Add Protection Order</EmbossLink>
              <EmbossLink $u>Modify Protection Order</EmbossLink>
              <EmbossLink $u>Copy Protection Order</EmbossLink>
            </Bar>
            <Strip />
            <Bar $cols="30px 58px 83px auto" $pad="0 0 0 20px">
              <EmbossLink $u>All</EmbossLink>
              <EmbossLink $u>Plea</EmbossLink>
              <EmbossLink $u>Disposition</EmbossLink>
              <EmbossLink $u>Sentence</EmbossLink>
            </Bar>
            <CloseRow>
              <CheckBox type="checkbox" id="close-case" />
              <label htmlFor="close-case">Close Case</label>
              <PushButton $width={80} $dim>Settings</PushButton>
            </CloseRow>
            <Strip />
          </Form>
          <ScrollArrows>
            <IconButton aria-label="Scroll up"><ScrollArrow /></IconButton>
            <IconButton aria-label="Scroll down"><ScrollArrow down /></IconButton>
          </ScrollArrows>
        </Scroller>
      </WindowBody>
      <WindowFoot>
        <Spacer $width={10} />
        <PushButton $width={113} $dim>Save/Cop<u>y</u></PushButton>
        <Grow />
        <PushButton $width={70} $dim><u>S</u>ave</PushButton>
        <Spacer $width={20} />
        <PushButton $width={70} $dim>E<u>x</u>it</PushButton>
        <Spacer $width={7} />
        <Grow />
        <PushButton $width={70} $dim><u>F</u>orms</PushButton>
        <Spacer $width={26} />
        <InfoBubble />
        <Spacer $width={4} />
      </WindowFoot>
    </Window>
  );
}

function BondWindow() {
  return (
    <Window $front $left={570} $top={365} $width={656} $height={340}>
      <WindowBar><IconButton aria-label="Close"><Cross /></IconButton></WindowBar>
      <WindowBody>
        <WindowTitle $front>Select a Bond on Case # 25-CT-001902-A-K</WindowTitle>
        <BondForm>
          <ShowRow>
            <label htmlFor="show">Show</label>
            <SelectBox id="show" value="All" width={200} />
          </ShowRow>
          <Bar><h2>Cash Bonds</h2></Bar>
          <Spacer $height={26} />
          <Bar><h2>Surety and Other Bonds</h2></Bar>
          <BondBox>
            <BondCard>
              <BondLine>PSE151281432 - Surety Bon</BondLine>
              <BondDate>06/10/2025 - Surety Posted</BondDate>
              <BondLine $small>COREA MANCIA, JOSUE ALAN</BondLine>
              <span>$Mz Bee's Bail Bonds</span>
              <span>$10,000.00</span>
              <span>Posted 06/10/2025</span>
              <BondCharge>1. MOVING TRAFFIC VIOL - OPERATE MMS - 06/08/2025</BondCharge>
            </BondCard>
          </BondBox>
          <Bar><h2>Property Bonds</h2></Bar>
        </BondForm>
      </WindowBody>
      <WindowFoot>
        <Grow />
        <PushButton $width={70}>E<u>x</u>it</PushButton>
        <Grow />
      </WindowFoot>
    </Window>
  );
}

export default function App() {
  return (
    <Page>
      <Global />
      <TopBar>
        <MenuNav>
          <MenuButton>Menu <Magnifier /></MenuButton>
          {menus.map((m) => <MenuButton key={m}>{m} <Chevron /></MenuButton>)}
        </MenuNav>
        <WindowTools>
          <IconButton aria-label="Sign out">
            <svg width="23" height="23" viewBox="0 0 23 23" fill="none" stroke="#fff" strokeWidth="1.600"><rect x="1" y="1" width="21" height="21" rx="2" /><path d="M6 11.500h10M12 7.500l4 4-4 4" /></svg>
          </IconButton>
          <IconButton aria-label="Settings">
            <svg width="19" height="19" viewBox="0 0 24 24" fill="none" stroke="#fff" strokeWidth="1.500" strokeLinejoin="round"><path d="M9.700 2h4.600l.6 3 2.100 1.200 2.900-1 2.300 4-2.300 2v1.600l2.300 2-2.300 4-2.900-1-2.100 1.200-.6 3H9.700l-.6-3L7 17.800l-2.900 1-2.300-4 2.300-2v-1.600l-2.300-2 2.300-4 2.900 1L9.100 5z" /><circle cx="12" cy="12" r="3.600" /></svg>
          </IconButton>
          <ToolSplit />
          <IconButton aria-label="Full screen">
            <svg width="24" height="22" viewBox="0 0 24 22" fill="none" stroke="#fff" strokeWidth="1.300"><path d="M5 1H1v4M19 1h4v4M5 21H1v-4M19 21h4v-4" /><rect x="7" y="6" width="10" height="10.500" /></svg>
          </IconButton>
          <IconButton aria-label="Minimize">
            <svg width="19" height="20" viewBox="0 0 19 20"><path d="M1 17h17v2H1z" fill="#fff" /></svg>
          </IconButton>
          <IconButton aria-label="Restore">
            <svg width="20" height="18" viewBox="0 0 20 18" fill="none" stroke="#fff" strokeWidth="1.200"><path d="M7 12H3V1h11v4M3 3h11M7 5.500h11V17H7zM7 8h11" /></svg>
          </IconButton>
          <IconButton aria-label="Close"><Cross s={16} /></IconButton>
        </WindowTools>
      </TopBar>

      <Body>
        <Rail>
          <RailButton aria-label="Print queue">
            <svg width="24" height="24" viewBox="0 0 24 24" fill="none" stroke="currentColor" strokeWidth="2"><path d="M6 3h12M6 7h12M6 11h12M6 15h12" /><path d="M5 12.500H3a1 1 0 0 0-1 1V20a2 2 0 0 0 2 2h16a2 2 0 0 0 2-2v-6.500a1 1 0 0 0-1-1h-2" /></svg>
          </RailButton>
          <RailButton aria-label="Favorites">
            <svg width="26" height="26" viewBox="0 0 24 24" fill="currentColor"><path d="M12 21.500 10.500 20C5 15.200 1.500 12 1.500 8A5.700 5.700 0 0 1 7.300 2.500c1.800 0 3.600.9 4.700 2.200a6.400 6.400 0 0 1 4.700-2.200A5.700 5.700 0 0 1 22.500 8c0 4-3.500 7.200-9 12z" /></svg>
          </RailButton>
          <RailButton aria-label="History">
            <svg width="26" height="26" viewBox="0 0 24 24" fill="none" stroke="currentColor" strokeWidth="2"><path d="M4 9a9 9 0 1 1 0 6.500" /><path d="M1 5v6.500h6.500z" fill="currentColor" stroke="none" /><path d="M12.500 7v5.500l4 2.500" strokeWidth="1.600" /></svg>
          </RailButton>
          <RailButton aria-label="Notifications">
            <svg width="24" height="26" viewBox="0 0 24 26" fill="currentColor"><path d="M12 1a2 2 0 0 0-2 2C6.500 4 4.500 7 4.500 11v7L2 20.500v1h20v-1L19.500 18v-7c0-4-2-7-5.500-8a2 2 0 0 0-2-2zM9.500 23a2.500 2.500 0 0 0 5 0z" /></svg>
          </RailButton>
        </Rail>

        <Panel>
          <Tabs>
            <TabIcon aria-label="Favorite">
              <svg width="12" height="12" viewBox="0 0 24 24" fill="none" stroke="currentColor" strokeWidth="2"><path d="m12 2 2.600 7.300H22l-6 4.700 2.200 7.500L12 17l-6.200 4.500L8 14 2 9.300h7.400z" /></svg>
            </TabIcon>
            <TabStrip>
              {tabs.map((t) => <Tab key={t} href="#" $active={t === "EVENTS"}><span>{t}</span></Tab>)}
            </TabStrip>
            <TabIcon aria-label="More tabs">
              <svg width="8" height="11" viewBox="0 0 8 11" fill="none" stroke="currentColor"><path d="M1 1v9l6-4.500z" /></svg>
            </TabIcon>
          </Tabs>
          <PanelBody>
            <CaseNumber href="#">25-CT-001902-A-K</CaseNumber>
            <Title top={10} />
            <CaseType>Type<span>Criminal Traffic</span></CaseType>
            <ListBar>
              <h2>Events</h2>
              <ListLinks>
                <EmbossLink><u>P</u>revious</EmbossLink>
                <EmbossLink><u>N</u>ext</EmbossLink>
              </ListLinks>
              <svg width="16" height="16" viewBox="0 0 16 16" fill="#e6f1fb" stroke="#1a3ee0" strokeWidth="1.200"><path d="M1 3c0 3 5 4 5 6v6h4V9c0-2 5-3 5-6z" /><ellipse cx="8" cy="3" rx="7" ry="2.200" /></svg>
            </ListBar>
            <EventTable>
              <colgroup>
                <col width="137" />
                <col />
                <col width="151" />
              </colgroup>
              <thead>
                <tr>
                  <th>Date</th>
                  <th>Type and Comment</th>
                  <th>
                    <svg width="14" height="15" viewBox="0 0 14 15"><rect x=".5" y=".5" width="13" height="14" rx="2" fill="#fff" stroke="#1d5b8f" /><path d="M7 3v9M2.500 7.500h9" stroke="#0d3f6b" strokeWidth="2.400" /></svg>
                  </th>
                </tr>
              </thead>
              <tbody>
                {events.map((e, i) => (
                  <tr key={i}>
                    <td>{e.date}</td>
                    <td>
                      <EventCell>
                        <EventName href="#" $plain={e.plain}>{e.name}</EventName>
                        {e.note && <EventNote>{e.note}</EventNote>}
                      </EventCell>
                    </td>
                    <td>{e.doc === "pdf" ? <Pdf /> : e.doc === "lens" ? <DocLens /> : null}</td>
                  </tr>
                ))}
              </tbody>
            </EventTable>
          </PanelBody>
          <Results>19 Results - Page 1 of 1<Grip /></Results>
        </Panel>

        <Side>
          <SideLink href="#">Favorites</SideLink>
          <SideLink href="#">Tasks</SideLink>
          <SideLink href="#">Jobs</SideLink>
          <SideLink href="#">Messages</SideLink>
          <SideRule />
          <SideTitle href="#">Active Screen Tabs</SideTitle>
          <SideLink href="#">What's New</SideLink>
          <SideLink href="#" $active>25-CT-001902-A-K</SideLink>
          <Shortcuts>
            <Shortcut $gap={22}><kbd>F</kbd>Forms</Shortcut>
            <Shortcut><kbd>S</kbd>Save</Shortcut>
            <Shortcut $gap={21}><kbd>X</kbd>Exit</Shortcut>
            <SelectionInput aria-label="Selection" placeholder="Enter selection..." />
          </Shortcuts>
        </Side>
      </Body>

      <Status>
        <span>July 18<sup>th</sup> 2025</span>|<span>2:14 pm</span>|<span>FLMONROEPRODNAV</span>|<span>kaylee.fernandez</span>
      </Status>

      <Taskbar>
        <StartButton aria-label="Start">
          <svg width="17" height="17" viewBox="0 0 17 17" fill="#fff"><path d="M0 2.400 7.500 1.300V8H0zM8.500 1.200 17 0v8H8.500zM0 9h7.500v6.700L0 14.600zM8.500 9H17v8l-8.500-1.200z" /></svg>
        </StartButton>
        <SearchBox>
          <Magnifier s={17} />
          <input aria-label="Search" placeholder="Type here to search" />
        </SearchBox>
        <AppRow>
          {apps.map((a) => (
            <AppButton key={a.name} aria-label={a.name} $open={a.open} $active={a.active}>{a.icon}</AppButton>
          ))}
        </AppRow>
        <Tray>
          <TrayArrow width="13" height="8" viewBox="0 0 13 8" fill="none" stroke="#fff" strokeWidth="1.400"><path d="M1 7l5.500-5.500L12 7" /></TrayArrow>
          <svg width="12" height="18" viewBox="0 0 12 18" fill="#fff"><rect x="3" y="0" width="6" height="12" rx="1" /><path d="M1 8v3.500a3 3 0 0 0 3 3h4a3 3 0 0 0 3-3V8M6 14v3M3 17.300h6" fill="none" stroke="#fff" strokeWidth="1.200" /></svg>
          <svg width="17" height="14" viewBox="0 0 17 14" fill="none" stroke="#fff" strokeWidth="1.200"><path d="M5 2.500h11v8H4V7M9.500 10.500V13M6 13.300h7M1 1h4v4H1zM3 5v8" /></svg>
          <svg width="18" height="14" viewBox="0 0 18 14" fill="none" stroke="#fff" strokeWidth="1.200"><path d="M1 4.500h3l3.500-3.500v12L4 9.500H1zM10 5q1.500 2 0 4M12.500 3q3 4 0 8M15 1q4.500 6 0 12" /></svg>
          <svg width="17" height="11" viewBox="0 0 17 11"><path d="M4 10.500a3.800 3.800 0 0 1-.5-7.200A5 5 0 0 1 12.500 3 3.800 3.800 0 0 1 14 10.500z" fill="#0f6fd0" /><path d="m1.500 9 7-4.500 7.500 4a2.500 2.500 0 0 1-2 2.300H4A3 3 0 0 1 1.500 9z" fill="#2aa5ee" /></svg>
          <Clock>2:14 PM<br />7/18/2025</Clock>
          <svg width="26" height="26" viewBox="0 0 26 26">
            <path d="M1 2h16v14h-5v3l-3.500-3H1z" fill="#fff" /><path d="M4 6h10M4 9h10M4 12h7" stroke="#22343a" strokeWidth="1.200" />
            <circle cx="17" cy="17" r="8" fill="#3c444a" stroke="#9aa0a4" />
            <text x="17" y="21.500" fontSize="12" {...letter}>4</text>
          </svg>
          <ShowDesktop />
        </Tray>
      </Taskbar>

      <MinutesWindow />
      <BondWindow />
    </Page>
  );
}
